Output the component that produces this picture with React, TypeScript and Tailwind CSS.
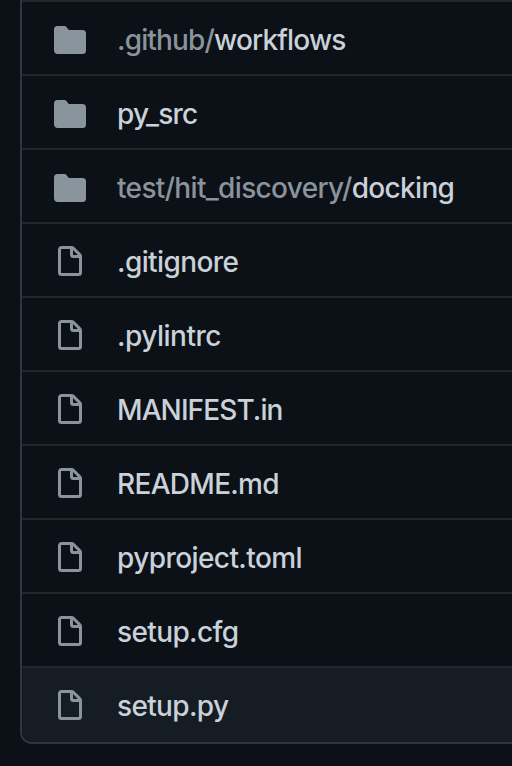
import { FC } from 'react';

type Entry = {
  type: 'dir' | 'file';
  prefix?: string;
  name: string;
  tracking: string;
};

const entries: Entry[] = [
  { type: 'dir', prefix: '.github/', name: 'workflows', tracking: 'tracking-[-0.84px]' },
  { type: 'dir', name: 'py_src', tracking: 'tracking-[-0.8px]' },
  { type: 'dir', prefix: 'test/hit_discovery/', name: 'docking', tracking: 'tracking-[-0.66px]' },
  { type: 'file', name: '.gitignore', tracking: 'tracking-[-0.6px]' },
  { type: 'file', name: '.pylintrc', tracking: 'tracking-[-0.5px]' },
  { type: 'file', name: 'MANIFEST.in', tracking: 'tracking-[-0.9px]' },
  { type: 'file', name: 'README.md', tracking: 'tracking-[-0.7px]' },
  { type: 'file', name: 'pyproject.toml', tracking: 'tracking-[-0.58px]' },
  { type: 'file', name: 'setup.cfg', tracking: 'tracking-[-0.62px]' },
  { type: 'file', name: 'setup.py', tracking: 'tracking-[-0.65px]' },
];

const FolderIcon: FC = () => (
  <svg viewBox="0 0 16 16" className="size-8 shrink-0" fill="currentColor" aria-hidden="true">
    <path d="M1.75 1A1.75 1.75 0 000 2.75v10.5C0 14.216.784 15 1.75 15h12.5A1.75 1.75 0 0016 13.25v-8.5A1.75 1.75 0 0014.25 3H7.5a.25.25 0 01-.2-.1l-.9-1.2C6.07 1.26 5.55 1 5 1H1.75z" />
  </svg>
);

const FileIcon: FC = () => (
  <svg viewBox="0 0 16 16" className="size-8 shrink-0" fill="currentColor" aria-hidden="true">
    <path
      fillRule="evenodd"
      d="M3.75 1.5a.25.25 0 00-.25.25v11.5c0 .138.112.25.25.25h8.5a.25.25 0 00.25-.25V6H9.75A1.75 1.75 0 018 4.25V1.5H3.75zm5.75.56v2.19c0 .138.112.25.25.25h2.19L9.5 2.06zM2 1.75C2 .784 2.784 0 3.75 0h5.086c.464 0 .909.184 1.237.513l3.414 3.414c.329.328.513.773.513 1.237v8.086A1.75 1.75 0 0112.25 15h-8.5A1.75 1.75 0 012 13.25V1.75z"
    />
  </svg>
);

export default function App() {
  return (
    <div className="h-[766px] w-[512px] overflow-hidden bg-[#0c1017] pl-5 font-['Inter','Liberation_Sans',sans-serif]">
      <div className="h-[744px] overflow-hidden rounded-bl-xl border-b-2 border-l-2 border-[#30363d]">
        {entries.map((entry) => (
          <div
            key={entry.name}
            className="flex h-[74px] items-start border-t-2 border-[#21262d] pt-[22px] pl-8 text-[#8a949d] last:h-[76px] last:bg-[#161c23]"
          >
            {entry.type === 'dir' ? <FolderIcon /> : <FileIcon />}
            <span className={`ml-[31px] text-[28px] leading-8 font-[450] whitespace-nowrap ${entry.tracking}`}>
              {entry.prefix}
              <span className="text-[#c9d1d9]">{entry.name}</span>
            </span>
          </div>
        ))}
      </div>
    </div>
  );
}
